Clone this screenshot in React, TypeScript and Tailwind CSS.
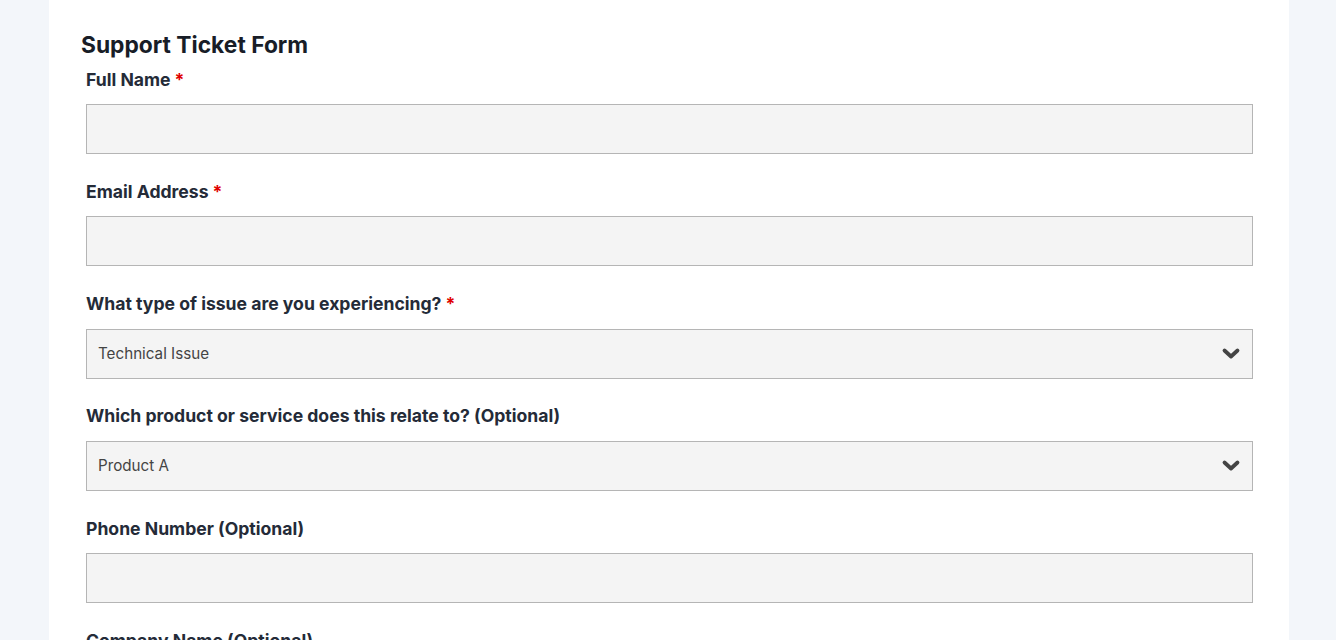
import React from "react";

const Chevron = () => (
  <svg width="20" height="14" viewBox="0 0 20 14" className="absolute right-[11px] top-1/2 -translate-y-1/2 pointer-events-none">
    <polyline points="3.5,3.5 10,9.5 16.5,3.5" fill="none" stroke="#444444" strokeWidth="3.8" strokeLinecap="round" strokeLinejoin="round" />
  </svg>
);

const Label = ({ text, required }: { text: string; required?: boolean }) => (
  <label className="block text-[17.6px] leading-[24px] font-bold text-[#242b38]">
    {text}
    {required && <span className="text-[#e00000] ml-[4px]">*</span>}
  </label>
);

const Input = () => (
  <div className="mt-[12px] h-[50px] border border-[#b5b5b5] bg-[#f4f4f4]" />
);

const Select = ({ value }: { value: string }) => (
  <div className="relative mt-[13px] h-[50px] border border-[#b5b5b5] bg-[#f4f4f4] flex items-center pl-[11px]">
    <span className="text-[15.2px] text-[#444444]">{value}</span>
    <Chevron />
  </div>
);

export default function App() {
  return (
    <div className="min-h-screen bg-[#f3f6fa]" style={{ fontFamily: "Inter, 'Liberation Sans', sans-serif" }}>
      <div className="ml-[49px] w-[1240px] bg-white pl-[32px] pr-[32px] pt-[31px] pb-[40px] min-h-[700px]">
        <h1 className="text-[22.8px] leading-[28px] font-bold text-[#181d27]">Support Ticket Form</h1>
        <div className="pl-[5px] pr-[4px] mt-[9px] flex flex-col gap-[26px]">
          <div>
            <Label text="Full Name" required />
            <Input />
          </div>
          <div>
            <Label text="Email Address" required />
            <Input />
          </div>
          <div>
            <Label text="What type of issue are you experiencing?" required />
            <Select value="Technical Issue" />
          </div>
          <div className="-mt-[1px]">
            <Label text="Which product or service does this relate to? (Optional)" />
            <Select value="Product A" />
          </div>
          <div>
            <Label text="Phone Number (Optional)" />
            <Input />
          </div>
          <div>
            <Label text="Company Name (Optional)" />
            <Input />
          </div>
        </div>
      </div>
    </div>
  );
}
